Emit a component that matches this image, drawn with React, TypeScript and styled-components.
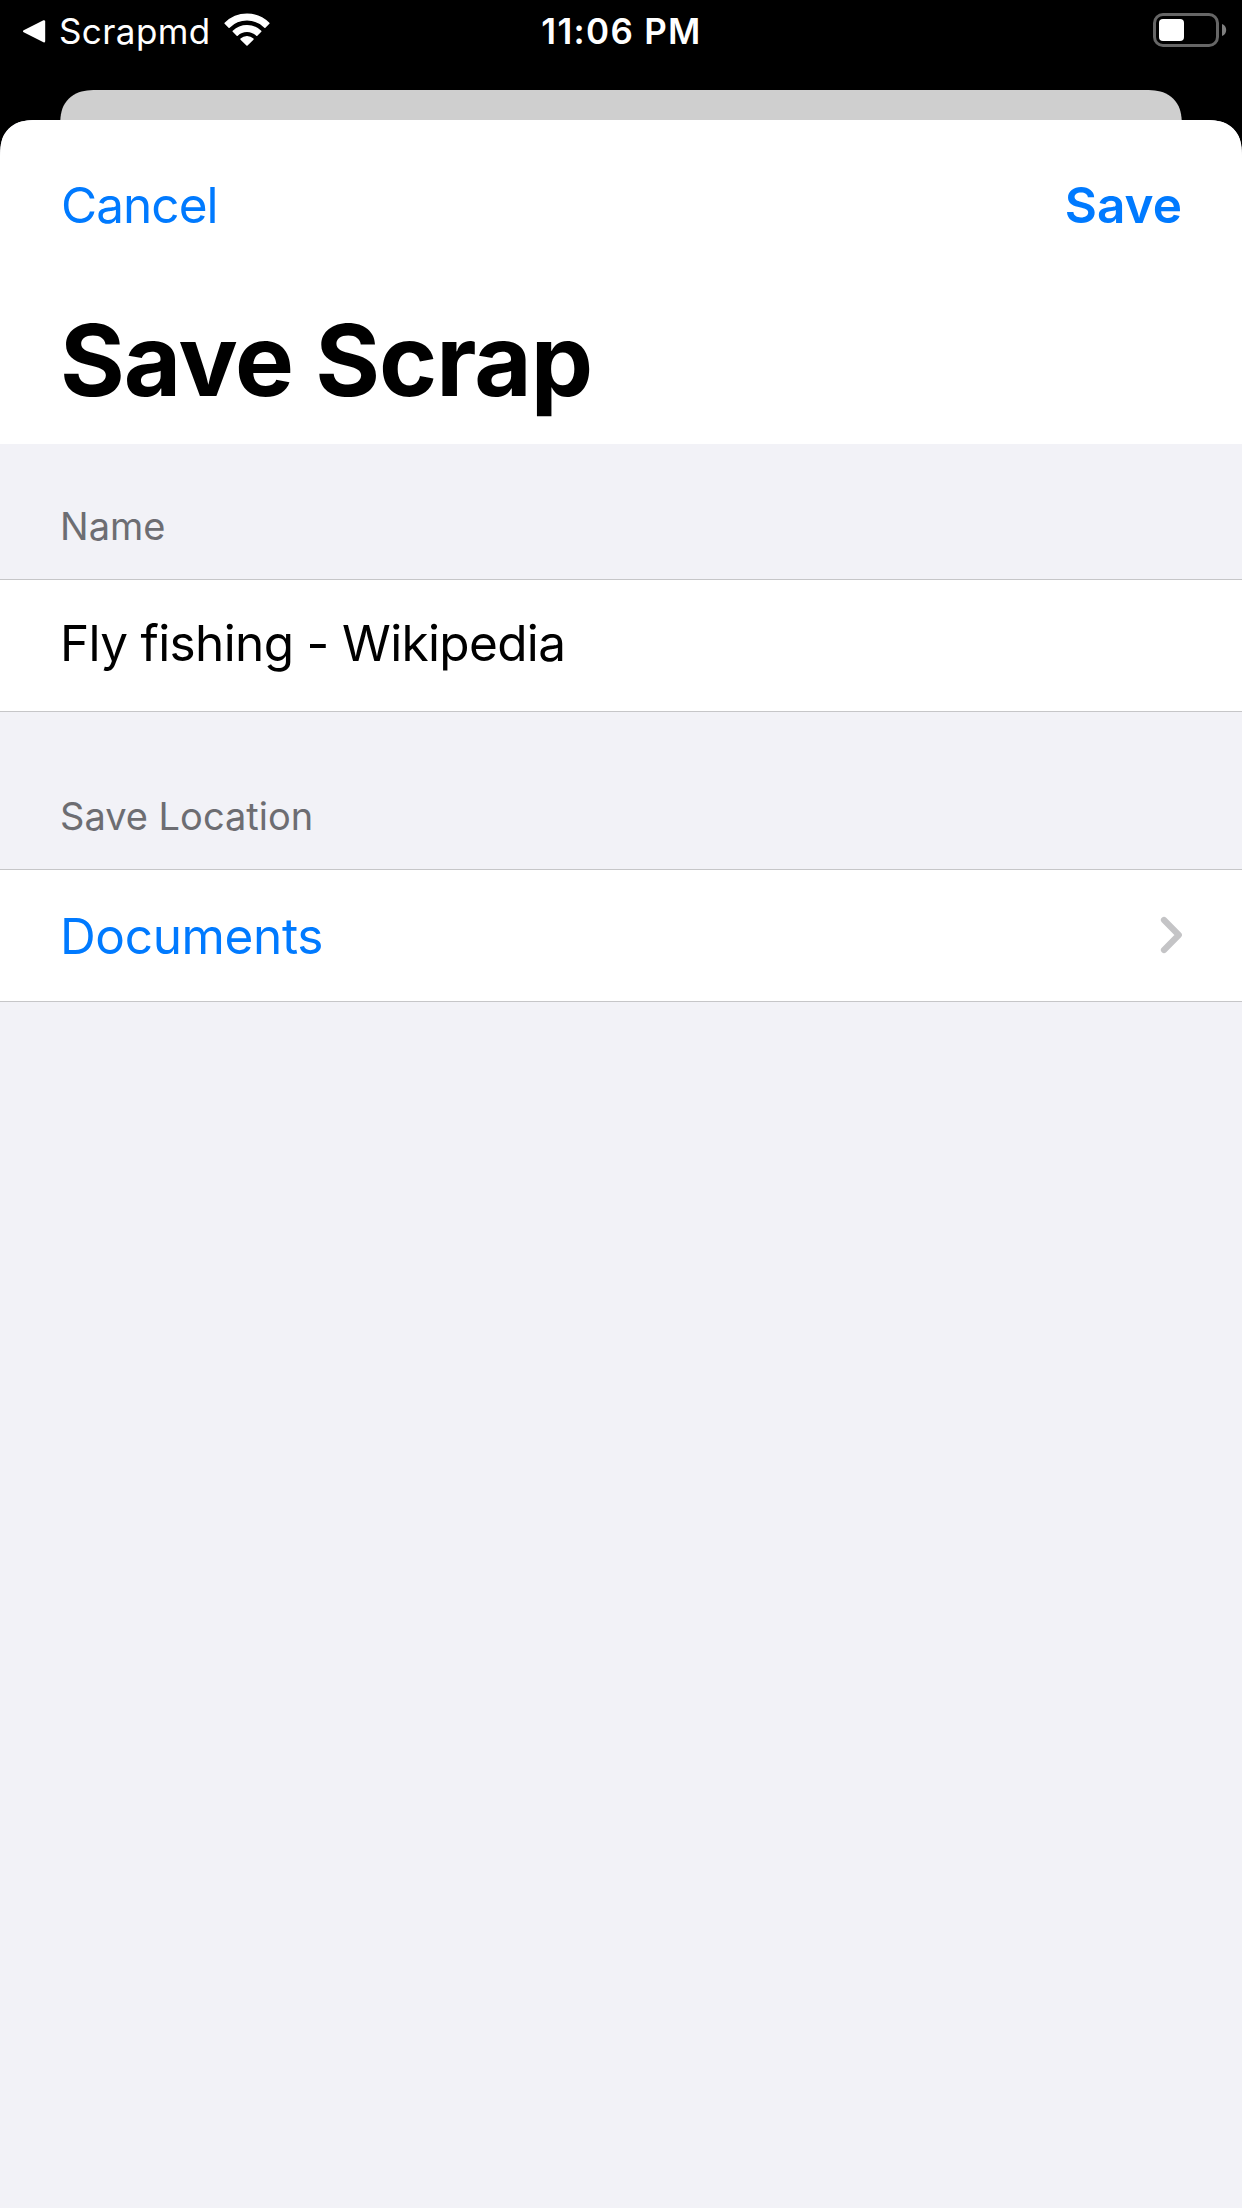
import React from 'react';
import styled, { createGlobalStyle } from 'styled-components';

const color = {
  tint: '#007aff',
  group: '#f2f2f7',
  separator: '#c6c6c8',
  secondary: '#6d6d72',
  chevron: '#c4c4c6',
};

const GlobalStyle = createGlobalStyle`
  *, *::before, *::after { box-sizing: border-box; }
  html { background: #000; }
  body {
    margin: 0;
    font-family: Inter, 'Liberation Sans', sans-serif;
    color: #000;
  }
`;

const Screen = styled.div`
  display: flex;
  flex-direction: column;
  width: 1242px;
  height: 2208px;
  overflow: hidden;
  background: #000;
`;

const StatusBar = styled.header`
  display: grid;
  grid-template-columns: 1fr auto 1fr;
  flex: none;
  height: 62px;
  padding: 0 15px 0 22px;
  color: #fff;
`;

const StatusGroup = styled.div<{ $end?: boolean }>`
  display: flex;
  align-items: flex-start;
  justify-content: ${(p) => (p.$end ? 'flex-end' : 'flex-start')};
`;

const StatusText = styled.span<{ $weight: number; $tracking: number }>`
  font-size: 35px;
  font-weight: ${(p) => p.$weight};
  line-height: 62px;
  letter-spacing: ${(p) => p.$tracking}px;
  white-space: nowrap;
`;

const BackApp = styled.button`
  display: flex;
  gap: 13px;
  padding: 0;
  border: 0;
  background: none;
  color: inherit;
  font: inherit;
`;

const BackIcon = styled.svg`
  width: 24px;
  height: 26px;
  margin-top: 18px;
`;

const WifiIcon = styled.svg`
  width: 46px;
  height: 34px;
  margin: 12px 0 0 13px;
`;

const Clock = styled(StatusText)`
  padding-right: 6px;
`;

const BatteryIcon = styled.svg`
  width: 74px;
  height: 34px;
  margin-top: 13px;
`;

const BackCard = styled.div`
  flex: none;
  height: 30px;
  margin: 28px 60px 0;
  background: #cfcfcf;
  clip-path: path('M0 100V45.9C0 32.65 0 26.05 2.25 18.94C5.07 11.18 11.18 5.07 18.94 2.25C26.05 0 32.65 0 45.9 0H1076.1C1089.35 0 1095.95 0 1103.06 2.25C1110.82 5.07 1116.93 11.18 1119.75 18.94C1122 26.05 1122 32.65 1122 45.9V100Z');
`;

const Sheet = styled.main`
  display: flex;
  flex: 1;
  flex-direction: column;
  background: ${color.group};
  clip-path: path('M0 2100V45.9C0 32.65 0 26.05 2.25 18.94C5.07 11.18 11.18 5.07 18.94 2.25C26.05 0 32.65 0 45.9 0H1196.1C1209.35 0 1215.95 0 1223.06 2.25C1230.82 5.07 1236.93 11.18 1239.75 18.94C1242 26.05 1242 32.65 1242 45.9V2100Z');
`;

const SheetHeader = styled.div`
  flex: none;
  padding: 0 60px 14px;
  background: #fff;
`;

const NavBar = styled.nav`
  display: flex;
  align-items: center;
  justify-content: space-between;
  height: 170px;
`;

const NavButton = styled.button<{ $primary?: boolean }>`
  padding: 0 0 0 1px;
  border: 0;
  background: none;
  color: ${color.tint};
  font-family: inherit;
  font-size: 49.5px;
  font-weight: ${(p) => (p.$primary ? 600 : 400)};
  line-height: 60px;
  letter-spacing: ${(p) => (p.$primary ? 0 : -0.95)}px;
`;

const Title = styled.h1`
  margin: 0;
  font-size: 99px;
  font-weight: 700;
  line-height: 140px;
  letter-spacing: -1.05px;
`;

const SectionHeader = styled.h2<{ $height: number }>`
  display: flex;
  flex: none;
  align-items: flex-end;
  height: ${(p) => p.$height}px;
  margin: 0;
  padding: 0 60px 29px;
  color: ${color.secondary};
  font-size: 38px;
  font-weight: 400;
  line-height: 48px;
`;

const Row = styled.div`
  display: flex;
  flex: none;
  align-items: center;
  justify-content: space-between;
  height: 133px;
  padding: 0 60px;
  border: solid ${color.separator};
  border-width: 1px 0;
  background: #fff;
`;

const FieldRow = styled(Row)`
  padding-bottom: 5px;
`;

const LinkRow = styled(Row)`
  padding-top: 1px;
  color: ${color.tint};
`;

const RowText = styled.span<{ $tracking: number }>`
  font-size: 49.5px;
  line-height: 60px;
  letter-spacing: ${(p) => p.$tracking}px;
  white-space: nowrap;
`;

const Chevron = styled.svg`
  width: 22px;
  height: 38px;
  margin-bottom: 2px;
`;

export default function App() {
  return (
    <Screen>
      <GlobalStyle />
      <StatusBar>
        <StatusGroup>
          <BackApp>
            <BackIcon viewBox="0 0 24 26" fill="#fff" stroke="#fff" strokeWidth="2.4" strokeLinejoin="round">
              <path d="M2.2 13.3 22 3.4V23.2Z" />
            </BackIcon>
            <StatusText $weight={400} $tracking={0.4}>Scrapmd</StatusText>
          </BackApp>
          <WifiIcon viewBox="224 12 46 34" fill="#fff" stroke="#fff" strokeWidth="1.6" strokeLinejoin="round">
            <path d="M225.2 23.2A31 31 0 0 1 268.8 23.2L264.9 27.1A25.6 25.6 0 0 0 229.1 27.1Z" />
            <path d="M233.3 31.3A19.6 19.6 0 0 1 260.7 31.3L256.8 35.2A14 14 0 0 0 237.2 35.2Z" />
            <path d="M241.1 39.1A8.4 8.4 0 0 1 252.9 39.1L247 45Z" />
          </WifiIcon>
        </StatusGroup>
        <Clock $weight={600} $tracking={1.3}>11:06 PM</Clock>
        <StatusGroup $end>
          <BatteryIcon viewBox="0 0 74 34">
            <rect x="1.5" y="1.5" width="63" height="31" rx="8.5" fill="none" stroke="#666" strokeWidth="3" />
            <rect x="6" y="6" width="25" height="22" rx="4" fill="#fff" />
            <path d="M69 11C72 12.2 73.2 14.6 73.2 17S72 21.8 69 23Z" fill="#7f7f7f" />
          </BatteryIcon>
        </StatusGroup>
      </StatusBar>

      <BackCard />

      <Sheet>
        <SheetHeader>
          <NavBar>
            <NavButton>Cancel</NavButton>
            <NavButton $primary>Save</NavButton>
          </NavBar>
          <Title>Save Scrap</Title>
        </SheetHeader>

        <SectionHeader $height={135}>Name</SectionHeader>
        <FieldRow>
          <RowText $tracking={-0.65}>Fly fishing - Wikipedia</RowText>
        </FieldRow>

        <SectionHeader $height={157}>Save Location</SectionHeader>
        <LinkRow>
          <RowText $tracking={-0.35}>Documents</RowText>
          <Chevron viewBox="0 0 22 38" fill="none" stroke={color.chevron} strokeWidth="6.2" strokeLinecap="round" strokeLinejoin="round">
            <path d="M4 4 18.8 19 4 34" />
          </Chevron>
        </LinkRow>
      </Sheet>
    </Screen>
  );
}
